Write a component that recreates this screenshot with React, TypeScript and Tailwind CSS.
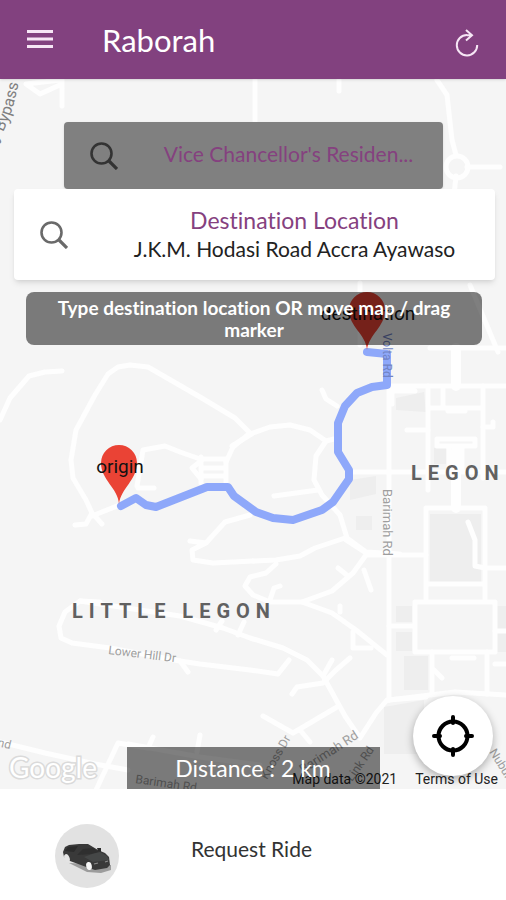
import React from 'react';

const blocks = [
  'M396 398 L424 392 L426 412 L396 410 Z',
  'M430 514 H481 V583 H430 Z',
  'M434 448 H446 V464 H434 Z',
  'M396 606 H412 V622 H396 Z',
  'M396 632 H412 V651 H396 Z',
  'M404 656 H428 V690 H404 Z',
  'M384 707 L424 700 V754 H384 Z',
  'M350 480 L376 476 V494 L350 500 Z',
  'M356 516 H372 V530 H356 Z',
  'M496 606 H506 V652 H496 Z',
];

const roads = [
  'M0 420 L10 398 L29 376 L45 372 L62 371',
  'M75 525 L86 524 L92 513 L86 500 L73 478 L71 460 L76 430 L95 395 L108 374 L118 367 L130 365 L148 367 L200 397 L235 418 L250 433 L233 447 L226 462',
  'M94 515 L102 524 M92 516 L122 504',
  'M137 486 L143 450 L165 446 L180 452 L200 459 M138 488 H154',
  'M201 459 H226 M201 468 H226 M201 476 H226 M201 457 V483 M226 459 V486',
  'M201 461 L192 468 L201 479',
  'M250 515 L225 522 L206 543 L190 541 M206 543 L192 550 L193 560 L213 563 L253 561',
  'M232 446 L253 433 L270 427 L290 425 L310 430 L326 441 L316 456 L314 480 L322 495 L340 515 L347 538 L366 552 L400 554',
  'M274 496 L318 490 M326 441 L338 438',
  'M322 390 L326 399 L337 406',
  'M60 80 L26 84 L40 94 L62 84 M62 80 V106',
  'M255 80 V128 M339 80 V91',
  'M437 80 L447 95 L452 140 L456 155',
  'M467 167 H500 M456 176 L454 195',
  'M360 283 V345 M470 285 L498 352',
  'M430 348 H506 M389 386 H506 M407 430 H428 M392 391 H415 M392 391 V404',
  'M428 386 V490 M483 386 V478 M428 408 H483 M443 388 V408 M448 411 H465',
  'M437 446 V439 H475 V446 M437 446 H475 M449 448 V470 M462 448 V470',
  'M483 427 H493 V422',
  'M353 472 H506 M389 386 V700',
  'M426 508 H485 M426 508 V600 M485 508 V600 M426 584 H485',
  'M468 522 L475 540 V566 L485 568 H506',
  'M389 626 H415 M415 602 H495 V652 H415 Z',
  'M432 652 V692 M487 652 V694 M495 664 H506 M495 631 H506',
  'M434 670 L442 678 M452 658 H474',
  'M253 561 L276 560 L300 556 L315 548 L345 538 M366 553 L346 540',
  'M276 564 L266 573 L250 577 L245 586 L253 595 L270 602 L302 602 L332 591 L353 573 L366 555 H426',
  'M338 568 L348 576 M364 570 L371 590 M270 600 L274 588 L280 586',
  'M302 602 L332 613 L356 630 L387 655 M340 612 V606',
  'M353 632 V648 H371',
  'M100 602 L80 601 L65 612 L59 626 L61 638 L72 643 L110 648 L180 661 L200 664 L250 670 L278 674 L289 660',
  'M80 601 L180 616 L223 628 L250 638 L283 648 L307 660 L323 676 L345 716 L360 738 L376 713 L387 700 L426 697',
  'M216 630 L222 621 M238 635 L244 622 M180 661 L188 672',
  'M350 658 L336 670 L323 683 L297 687 L292 694 M323 676 L332 660',
  'M337 707 L293 733 L263 716 M300 730 L310 742',
  'M0 742 L45 753 L95 764 L128 770',
  'M96 790 L118 743 L148 748 M148 748 L153 737 M200 735 L197 752',
  'M128 744 L200 757 L260 765',
  'M389 700 L455 692 L506 695',
];

function MapCanvas() {
  return (
    <svg
      className="absolute inset-0 h-full w-full bg-[#f5f5f5]"
      viewBox="0 79 506 710"
      preserveAspectRatio="xMidYMid slice"
      role="img"
      aria-label="Map of the route from origin to destination"
    >
      {blocks.map((d) => (
        <path key={d} d={d} fill="#eeeeee" />
      ))}
      <g fill="none" stroke="#fefefe" strokeWidth="5" strokeLinecap="round" strokeLinejoin="round">
        {roads.map((d) => (
          <path key={d} d={d} />
        ))}
        <circle cx="457" cy="167" r="11" />
        <path d="M456 348 V386 M456 450 V508" strokeWidth="10" />
      </g>
      <g className="font-[Roboto,sans-serif] text-[12px]" fill="#9e9e9e">
        <path id="bypass-road" d="M-3 142 Q15 116 21 66" fill="none" />
        <text className="text-[16px]" fill="#808080">
          <textPath href="#bypass-road">y Bypass</textPath>
        </text>
        <text transform="translate(108 654) rotate(7)">Lower Hill Dr</text>
        <text transform="translate(383 489) rotate(90)" className="text-[13px]">Barimah Rd</text>
        <text transform="translate(-3 746) rotate(14)">nd</text>
        <text transform="translate(267 780) rotate(-60)">Knoss Dr</text>
        <text transform="translate(303 774) rotate(-33)" className="text-[13px]">Barimah Rd</text>
        <text transform="translate(352 782) rotate(-55)">Link Rd</text>
        <text transform="translate(135 783) rotate(8)">Barimah Rd</text>
        <text transform="translate(489 752) rotate(58)">Nubui</text>
      </g>
      <path
        d="M121 506 L136 498 L146 505 L156 507 L207 487 L228 487 L234 496 L256 512 L273 518 L293 520 L322 510 L333 502 L349 479 V470 L338 452 V423 L345 406 L357 393 L372 387 L387 385 V354 L367 352"
        fill="none"
        stroke="#8ea8fa"
        strokeWidth="8"
        strokeLinecap="round"
        strokeLinejoin="round"
      />
      <text transform="translate(383 333) rotate(90)" className="font-[Roboto,sans-serif] text-[12px]" fill="#7183c4">Volta Rd</text>
      <g className="font-[Roboto,sans-serif] text-[20px] font-bold tracking-[6px]" fill="#616161">
        <text x="411" y="480">LEGON</text>
        <text x="72" y="618">LITTLE LEGON</text>
      </g>
      <g fill="#ea4335">
        <path d="M119 504 C118 488 101 480 101 463 A18 18 0 0 1 137 463 C137 480 121 488 119 504 Z" />
        <path d="M367 350 C366 334 349 327 349 310 A18 18 0 0 1 385 310 C385 327 369 334 367 350 Z" />
      </g>
      <g className="font-[Roboto,sans-serif] text-[19px]" fill="#111111" textAnchor="middle">
        <text x="120" y="473">origin</text>
        <text x="368" y="320">destination</text>
      </g>
    </svg>
  );
}

function SearchIcon({ className }: { className: string }) {
  return (
    <svg className={className} viewBox="0 0 28 28" fill="none" stroke="currentColor" strokeWidth="2.6" aria-hidden="true">
      <circle cx="11.5" cy="11.5" r="10" />
      <path d="M18.5 18.5 L27 27" strokeWidth="3.2" />
    </svg>
  );
}

function CarIcon() {
  return (
    <svg className="w-16" viewBox="0 0 64 64" aria-hidden="true">
      <circle cx="32" cy="32" r="32" fill="#e2e2e2" />
      <path d="M14 39 L32 48 L46 49 L56 46 L56 41 Z" fill="#9c9c9c" />
      <path d="M8 28 L10 23 L14 21 L24 20 L33 20 L38 23 L43 26 L50 29 L54 33 L55 41 L52 44 L40 46 L34 44 L15 37 L9 33 Z" fill="#393939" />
      <path d="M22 31 L28 25 L38 24 L44 28 L37 30 Z" fill="#2f2f2f" />
      <path d="M10 27 L13 23 L23 22 L19 28 Z" fill="#2c2c2c" />
      <path d="M29 33 L37 30 L45 28 L52 32 L54 36 L38 38 Z" fill="#454747" />
      <path d="M42 24 L46 24 L46 28 L43 27 Z" fill="#2b2b2b" />
      <path d="M39 40 L43 39 M50 38 L53 37" stroke="#8d8d8d" strokeWidth="1.2" />
      <ellipse cx="12" cy="34" rx="2.5" ry="4" transform="rotate(-24 12 34)" fill="#e4e4e4" />
      <ellipse cx="34" cy="42" rx="2.8" ry="4" transform="rotate(-12 34 42)" fill="#f8f8f8" />
    </svg>
  );
}

export default function App() {
  return (
    <main className="flex min-h-screen flex-col bg-white font-[Lato,sans-serif] [font-variant-ligatures:none]">
      <header className="z-10 flex items-center bg-[#82417f] px-[27px] pt-[22px] pb-5 text-white shadow">
        <button type="button" aria-label="Open menu" className="-mt-1">
          <svg className="w-[26px]" viewBox="0 0 26 18" fill="#f6e6f5" aria-hidden="true">
            <path d="M0 0H26V3H0Z M0 7.5H26V10.5H0Z M0 15H26V18H0Z" />
          </svg>
        </button>
        <h1 className="ml-[49px] flex-1 text-[31px] leading-[37px]">Raborah</h1>
        <button type="button" aria-label="Refresh" className="mt-1">
          <svg className="w-6" viewBox="0 0 24 28" fill="none" stroke="#f6e6f5" strokeWidth="2" aria-hidden="true">
            <path d="M12 6 A10.2 10.2 0 1 0 22.2 16" />
            <path d="M11 1 L17 6.3 L11 11.5 M17 6.3 H12" />
          </svg>
        </button>
      </header>

      <section className="relative flex flex-1 flex-col">
        <MapCanvas />
        <div className="relative flex flex-col pt-[43px]">
          <button type="button" className="ml-16 mr-[63px] flex h-[67px] items-center rounded bg-[#808080] pl-[26px] pr-7 shadow">
            <SearchIcon className="w-7 text-[#333333]" />
            <span className="flex-1 pb-1 pl-11 text-center text-[21px] leading-6 text-[#85417f]">Vice Chancellor's Residen...</span>
          </button>
          <button type="button" className="ml-[14px] mr-[11px] flex h-[91px] items-center rounded bg-white pl-[26px] pr-8 shadow-md">
            <SearchIcon className="w-7 text-[#6a6a6a]" />
            <span className="flex-1 pl-[58px] text-center">
              <span className="block text-[23px] leading-7 text-[#85417f]">Destination Location</span>
              <span className="block text-[21px] leading-[29px] text-[#222222]">J.K.M. Hodasi Road Accra Ayawaso</span>
            </span>
          </button>
          <p className="ml-[26px] mr-6 mt-3 rounded-lg bg-black/50 px-5 pb-1 pt-[5px] text-center text-[19px] font-bold leading-[22px] text-white">
            Type destination location OR move map / drag marker
          </p>
        </div>

        <div className="relative mt-auto flex h-[93px] items-end font-[Roboto,sans-serif] text-[14px] leading-5 text-[#222222]">
          <svg className="ml-2 h-[41px] w-[92px]" viewBox="0 0 92 41" role="img" aria-label="Google">
            <text x="1" y="30" className="font-[Lato,sans-serif] text-[28px]" fill="#ffffff" stroke="#dadada" strokeWidth="3" paintOrder="stroke">Google</text>
          </svg>
          <span className="ml-auto mr-[18px]">Map data ©2021</span>
          <a href="#terms" className="mr-2">Terms of Use</a>
          <p className="absolute bottom-0 left-1/4 h-[42px] w-1/2 bg-black/50 text-center text-[23px] leading-[42px] text-white font-[Lato,sans-serif]">Distance : 2 km</p>
          <button type="button" aria-label="Center on my location" className="absolute right-[13px] top-0 flex size-20 items-center justify-center rounded-full bg-white shadow-[0_3px_8px_rgba(0,0,0,0.3)]">
            <svg className="w-[42px]" viewBox="0 0 42 42" fill="none" stroke="#000000" strokeWidth="4" strokeLinecap="round" aria-hidden="true">
              <circle cx="21" cy="21" r="14.5" />
              <path d="M21 2 V8 M21 34 V40 M2 21 H8 M34 21 H40" />
            </svg>
          </button>
        </div>
      </section>

      <button type="button" className="relative flex items-center bg-white pb-3 pl-[55px] pt-[35px] text-left">
        <CarIcon />
        <span className="-mt-[14px] ml-[72px] text-[21px] leading-6 text-[#333333]">Request Ride</span>
      </button>
    </main>
  );
}
